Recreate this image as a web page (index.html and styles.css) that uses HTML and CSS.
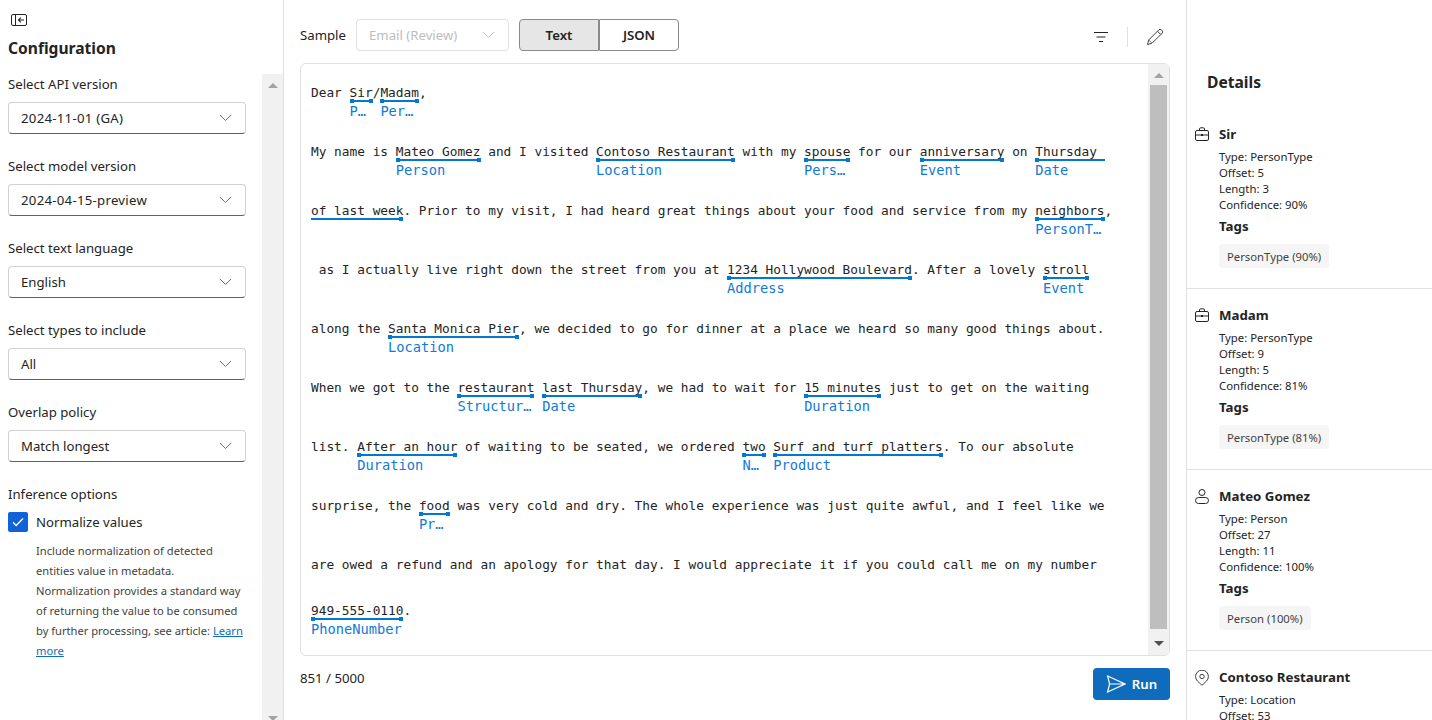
FILE: index.html
```html
<!DOCTYPE html>
<html lang="en">
<head>
<meta charset="utf-8">
<title>Text analysis</title>
<link rel="stylesheet" href="styles.css">
</head>
<body>
<div class="app">
  <aside class="config">
    <div class="collapse">
      <svg width="16" height="12" viewBox="0 0 16 12" fill="none" stroke="#242424"><rect x="0.5" y="0.5" width="15" height="11" rx="1.5"/><path d="M4.5 0.5v11"/><path d="M13 6H7.5M9.8 3.7 7.5 6l2.3 2.3" stroke-width="1.1"/></svg>
    </div>
    <h2 class="config-title">Configuration</h2>
    <div class="config-body">
      <div class="form">
        <div class="field"><div class="field-label">Select API version</div><div class="select"><span class="num">2024-11-01 (GA)</span><svg class="chev" viewBox="0 0 14 8"><path d="M1 1l6 6 6-6"/></svg></div></div>
        <div class="field"><div class="field-label">Select model version</div><div class="select"><span class="num">2024-04-15-preview</span><svg class="chev" viewBox="0 0 14 8"><path d="M1 1l6 6 6-6"/></svg></div></div>
        <div class="field"><div class="field-label">Select text language</div><div class="select"><span>English</span><svg class="chev" viewBox="0 0 14 8"><path d="M1 1l6 6 6-6"/></svg></div></div>
        <div class="field"><div class="field-label">Select types to include</div><div class="select"><span>All</span><svg class="chev" viewBox="0 0 14 8"><path d="M1 1l6 6 6-6"/></svg></div></div>
        <div class="field"><div class="field-label">Overlap policy</div><div class="select"><span>Match longest</span><svg class="chev" viewBox="0 0 14 8"><path d="M1 1l6 6 6-6"/></svg></div></div>
        <div class="field-label">Inference options</div>
        <div class="check-row">
          <span class="checkbox"><svg width="12" height="10" viewBox="0 0 12 10" fill="none" stroke="#fff" stroke-width="1.3"><path d="M1 5.2 4.2 8.5 11 1.5"/></svg></span>
          <span class="check-label">Normalize values</span>
        </div>
        <p class="hint">Include normalization of detected entities value in metadata. Normalization provides a standard way of returning the value to be consumed by further processing, see article: <a href="#">Learn more</a></p>
      </div>
      <div class="scrollbar outer">
        <span class="arrow up"></span>
        <span class="arrow down"></span>
      </div>
    </div>
  </aside>

  <main class="center">
    <div class="toolbar">
      <span class="sample-label">Sample</span>
      <div class="select disabled"><span>Email (Review)</span><svg class="chev" viewBox="0 0 14 8"><path d="M1 1l6 6 6-6"/></svg></div>
      <div class="toggle">
        <span class="toggle-btn active">Text</span>
        <span class="toggle-btn">JSON</span>
      </div>
      <div class="tools">
        <svg class="tool" width="14" height="12" viewBox="0 0 14 12" fill="none" stroke="#242424"><path d="M0 1.500h14M2.500 6h9M5 10.500h4"/></svg>
        <span class="tool-sep"></span>
        <svg class="tool" width="18" height="18" viewBox="0 0 18 18" fill="none" stroke="#424242"><path d="M1.500 16.500 2.700 12 12.800 1.900a1.800 1.800 0 0 1 2.600 0l.7.7a1.800 1.800 0 0 1 0 2.600L6 15.300Z"/><path d="M11.500 3.200l3.300 3.300"/><path d="M2.700 12 6 15.300" stroke="#b8652a"/></svg>
      </div>
    </div>

    <div class="panel">
      <div class="doc">
        <div class="row"><span>Dear </span><span class="ent"><span class="ent-text">Sir</span><span class="bar"></span><span class="ent-label">PersonType</span></span><span>/</span><span class="ent"><span class="ent-text">Madam</span><span class="bar"></span><span class="ent-label">PersonType</span></span><span>,</span></div>
        <div class="row"><span>My name is </span><span class="ent"><span class="ent-text">Mateo Gomez</span><span class="bar"></span><span class="ent-label">Person</span></span><span> and I visited </span><span class="ent"><span class="ent-text">Contoso Restaurant</span><span class="bar"></span><span class="ent-label">Location</span></span><span> with my </span><span class="ent"><span class="ent-text">spouse</span><span class="bar"></span><span class="ent-label">PersonType</span></span><span> for our </span><span class="ent"><span class="ent-text">anniversary</span><span class="bar"></span><span class="ent-label">Event</span></span><span> on </span><span class="ent"><span class="ent-text">Thursday </span><span class="bar no-end"></span><span class="ent-label">Date</span></span></div>
        <div class="row"><span class="ent"><span class="ent-text">of last week</span><span class="bar no-start"></span></span><span>. Prior to my visit, I had heard great things about your food and service from my </span><span class="ent"><span class="ent-text">neighbors</span><span class="bar"></span><span class="ent-label">PersonType</span></span><span>,</span></div>
        <div class="row"><span> as I actually live right down the street from you at </span><span class="ent"><span class="ent-text">1234 Hollywood Boulevard</span><span class="bar"></span><span class="ent-label">Address</span></span><span>. After a lovely </span><span class="ent"><span class="ent-text">stroll</span><span class="bar"></span><span class="ent-label">Event</span></span></div>
        <div class="row"><span>along the </span><span class="ent"><span class="ent-text">Santa Monica Pier</span><span class="bar"></span><span class="ent-label">Location</span></span><span>, we decided to go for dinner at a place we heard so many good things about.</span></div>
        <div class="row"><span>When we got to the </span><span class="ent"><span class="ent-text">restaurant</span><span class="bar"></span><span class="ent-label">Structural</span></span><span> </span><span class="ent"><span class="ent-text">last Thursday</span><span class="bar"></span><span class="ent-label">Date</span></span><span>, we had to wait for </span><span class="ent"><span class="ent-text">15 minutes</span><span class="bar"></span><span class="ent-label">Duration</span></span><span> just to get on the waiting</span></div>
        <div class="row"><span>list. </span><span class="ent"><span class="ent-text">After an hour</span><span class="bar"></span><span class="ent-label">Duration</span></span><span> of waiting to be seated, we ordered </span><span class="ent"><span class="ent-text">two</span><span class="bar"></span><span class="ent-label">Number</span></span><span> </span><span class="ent"><span class="ent-text">Surf and turf platters</span><span class="bar"></span><span class="ent-label">Product</span></span><span>. To our absolute</span></div>
        <div class="row"><span>surprise, the </span><span class="ent"><span class="ent-text">food</span><span class="bar"></span><span class="ent-label">Product</span></span><span> was very cold and dry. The whole experience was just quite awful, and I feel like we</span></div>
        <div class="row"><span>are owed a refund and an apology for that day. I would appreciate it if you could call me on my number</span></div>
        <div class="row"><span class="ent"><span class="ent-text">949-555-0110</span><span class="bar"></span><span class="ent-label">PhoneNumber</span></span><span>.</span></div>
      </div>
      <div class="scrollbar inner">
        <span class="arrow up"></span>
        <span class="thumb"></span>
        <span class="arrow down"></span>
      </div>
    </div>

    <div class="footer">
      <span class="count">851 / 5000</span>
      <button class="run" type="button">
        <svg width="20" height="18" viewBox="0 0 20 18" fill="none" stroke="#fff" stroke-width="1.2"><path d="M1.600 1 19 9 1.600 17 3.600 9ZM3.600 9H19"/></svg>
        <span>Run</span>
      </button>
    </div>
  </main>

  <aside class="details">
    <h2 class="details-title">Details</h2>
    <section class="item">
      <div class="item-head">
        <svg class="item-icon" width="14" height="14" viewBox="0 0 14 14" fill="none" stroke="#242424"><rect x="0.500" y="3.500" width="13" height="10" rx="1.500"/><path d="M4.500 3.500V2a1.200 1.200 0 0 1 1.200-1.200h2.600A1.200 1.200 0 0 1 9.500 2v1.500M.5 8h13"/><path d="M6 8h2" stroke-width="2"/></svg>
        <h3 class="item-name">Sir</h3>
      </div>
      <div class="meta"><div>Type: PersonType</div><div>Offset: 5</div><div>Length: 3</div><div>Confidence: 90%</div></div>
      <div class="tags-title">Tags</div>
      <span class="chip">PersonType (90%)</span>
    </section>
    <section class="item">
      <div class="item-head">
        <svg class="item-icon" width="14" height="14" viewBox="0 0 14 14" fill="none" stroke="#242424"><rect x="0.500" y="3.500" width="13" height="10" rx="1.500"/><path d="M4.500 3.500V2a1.200 1.200 0 0 1 1.200-1.200h2.600A1.200 1.200 0 0 1 9.500 2v1.500M.5 8h13"/><path d="M6 8h2" stroke-width="2"/></svg>
        <h3 class="item-name">Madam</h3>
      </div>
      <div class="meta"><div>Type: PersonType</div><div>Offset: 9</div><div>Length: 5</div><div>Confidence: 81%</div></div>
      <div class="tags-title">Tags</div>
      <span class="chip">PersonType (81%)</span>
    </section>
    <section class="item">
      <div class="item-head">
        <svg class="item-icon" width="14" height="15" viewBox="0 0 14 15" fill="none" stroke="#242424"><circle cx="7" cy="3.500" r="3"/><rect x="0.500" y="8.500" width="13" height="6" rx="3"/></svg>
        <h3 class="item-name">Mateo Gomez</h3>
      </div>
      <div class="meta"><div>Type: Person</div><div>Offset: 27</div><div>Length: 11</div><div>Confidence: 100%</div></div>
      <div class="tags-title">Tags</div>
      <span class="chip">Person (100%)</span>
    </section>
    <section class="item">
      <div class="item-head">
        <svg class="item-icon" width="14" height="16" viewBox="0 0 14 16" fill="none" stroke="#424242"><path d="M7 15.300 2.400 11A6.400 6.400 0 1 1 11.600 11Z"/><circle cx="7" cy="6.500" r="2.200"/></svg>
        <h3 class="item-name">Contoso Restaurant</h3>
      </div>
      <div class="meta"><div>Type: Location</div><div>Offset: 53</div></div>
    </section>
  </aside>
</div>
</body>
</html>
```
FILE: styles.css
```css
* { box-sizing: border-box; }
html, body { margin: 0; height: 720px; overflow: hidden; background: #fff; }
body { font-family: "Noto Sans", "Liberation Sans", sans-serif; font-size: 13.2px; color: #242424; }
h2, h3, p { margin: 0; }

.app { display: flex; height: 720px; }

/* Configuration column */
.config { width: 284px; flex: none; border-right: 1px solid #e0e0e0; display: flex; flex-direction: column; }
.collapse { height: 16px; margin: 12px 0 0 11px; display: flex; align-items: center; }
.config-title { font-size: 15.6px; line-height: 20px; font-weight: 700; margin: 10px 0 16px 8px; }
.config-body { flex: 1; display: flex; min-height: 0; }
.form { flex: 1; padding-left: 8px; }
.field { margin-bottom: 22px; width: 238px; }
.field-label { line-height: 20px; height: 20px; }
.field .field-label { margin-bottom: 8px; }

.select { height: 32px; border: 1px solid #d1d1d1; border-bottom-color: #616161; border-radius: 4px; padding: 0 13px 0 12px; display: flex; align-items: center; justify-content: space-between; }
.num { letter-spacing: 0.27px; }
.chev { width: 13px; height: 7.5px; fill: none; stroke: #616161; stroke-width: 1; }
.select.disabled { width: 153px; border-color: #e0e0e0; color: #bdbdbd; }
.select.disabled .chev { stroke: #bdbdbd; }

.check-row { display: flex; align-items: center; gap: 8px; height: 20px; margin-top: 8px; }
.checkbox { width: 20px; height: 20px; background: #0f62d8; border-radius: 2px; display: flex; align-items: center; justify-content: center; }
.check-label { color: #242424; }
.hint { margin: 9px 0 0 28px; width: 212px; font-size: 11.15px; line-height: 20px; color: #424242; }
.hint a { color: #0f6cbd; text-decoration: underline; }

/* Fake scrollbars */
.scrollbar { flex: none; background: #f1f1f1; display: flex; flex-direction: column; align-items: center; }
.scrollbar.outer { width: 21px; justify-content: space-between; overflow: hidden; height: 646px; }
.arrow { width: 0; height: 0; border-left: 5px solid transparent; border-right: 5px solid transparent; flex: none; }
.arrow.up { border-bottom: 5px solid #a3a3a3; }
.arrow.down { border-top: 5px solid #a3a3a3; }
.outer .arrow.up { margin-top: 9px; }
.outer .arrow.down { margin-bottom: -1px; }

/* Center column */
.center { flex: 1; min-width: 0; padding: 19px 16px 0; display: flex; flex-direction: column; }
.toolbar { display: flex; align-items: center; height: 32px; margin-bottom: 12px; }
.sample-label { width: 56px; flex: none; }
.toggle { display: flex; margin-left: 10px; }
.toggle-btn { width: 80px; height: 32px; border: 1px solid #8a8a8a; display: flex; align-items: center; justify-content: center; font-weight: 600; }
.toggle-btn:first-child { border-radius: 4px 0 0 4px; background: #e6e6e6; }
.toggle-btn:last-child { border-radius: 0 4px 4px 0; }
.tools { margin-left: auto; display: flex; align-items: center; padding: 4px 6px 0 0; }
.tool-sep { width: 1px; height: 20px; background: #e0e0e0; margin: 0 18px 0 19px; }

.panel { height: 593px; border: 1px solid #e0e0e0; border-radius: 6px; display: flex; overflow: hidden; }
.doc { flex: 1; min-width: 0; padding: 19px 0 0 10px; font-family: "DejaVu Sans Mono", "Liberation Mono", monospace; font-size: 12.8px; color: #242424; }
.row { display: flex; align-items: flex-start; min-height: 46px; padding-bottom: 22px; line-height: 19px; }
.row > span { white-space: pre; }
.ent { display: flex; flex-direction: column; }
.ent-text { display: block; height: 17px; white-space: pre; }
.bar { display: block; height: 2px; margin-bottom: 1px; background: #0078d4; position: relative; }
.bar::before, .bar::after { content: ""; position: absolute; top: -1px; width: 4px; height: 4px; background: #0078d4; }
.bar::before { left: 0; }
.bar::after { right: 0; }
.bar.no-end::after, .bar.no-start::before { display: none; }
.ent-label { display: block; width: 0; min-width: 100%; margin-top: -1px; line-height: 18px; font-size: 13.7px; color: #0f7ad8; overflow: hidden; text-overflow: ellipsis; white-space: nowrap; }

.scrollbar.inner { width: 21px; }
.inner .arrow.up { margin: 9px 0 7px; }
.inner .arrow.down { margin: 12px 0 0; border-top-color: #505050; }
.thumb { width: 17px; height: 544px; background: #bebebe; flex: none; }

.footer { display: flex; justify-content: space-between; align-items: flex-start; margin-top: 12px; }
.count { line-height: 20px; }
.run { width: 77px; height: 32px; border: 0; border-radius: 4px; background: #0f6cbd; color: #fff; font: 600 13.2px "Noto Sans", sans-serif; display: flex; align-items: center; justify-content: center; gap: 6px; padding: 0; }

/* Details column */
.details { width: 246px; flex: none; border-left: 1px solid #e0e0e0; overflow: hidden; }
.details-title { font-size: 15.6px; font-weight: 700; line-height: 20px; margin: 72px 0 16px 20px; }
.item { border-bottom: 1px solid #e0e0e0; padding: 16px 8px 20px 32px; }
.item-head { position: relative; height: 20px; }
.item-icon { position: absolute; left: -24px; top: 3px; }
.item-name { font-size: 13.25px; line-height: 20px; font-weight: 700; }
.meta { margin-top: 5px; font-size: 11.35px; line-height: 16px; color: #242424; }
.tags-title { margin-top: 3px; font-size: 13.25px; line-height: 20px; font-weight: 700; }
.chip { display: inline-flex; align-items: center; height: 24px; margin-top: 8px; padding: 0 8px; border-radius: 4px; background: #f5f5f5; color: #424242; font-size: 11.3px; }
```
